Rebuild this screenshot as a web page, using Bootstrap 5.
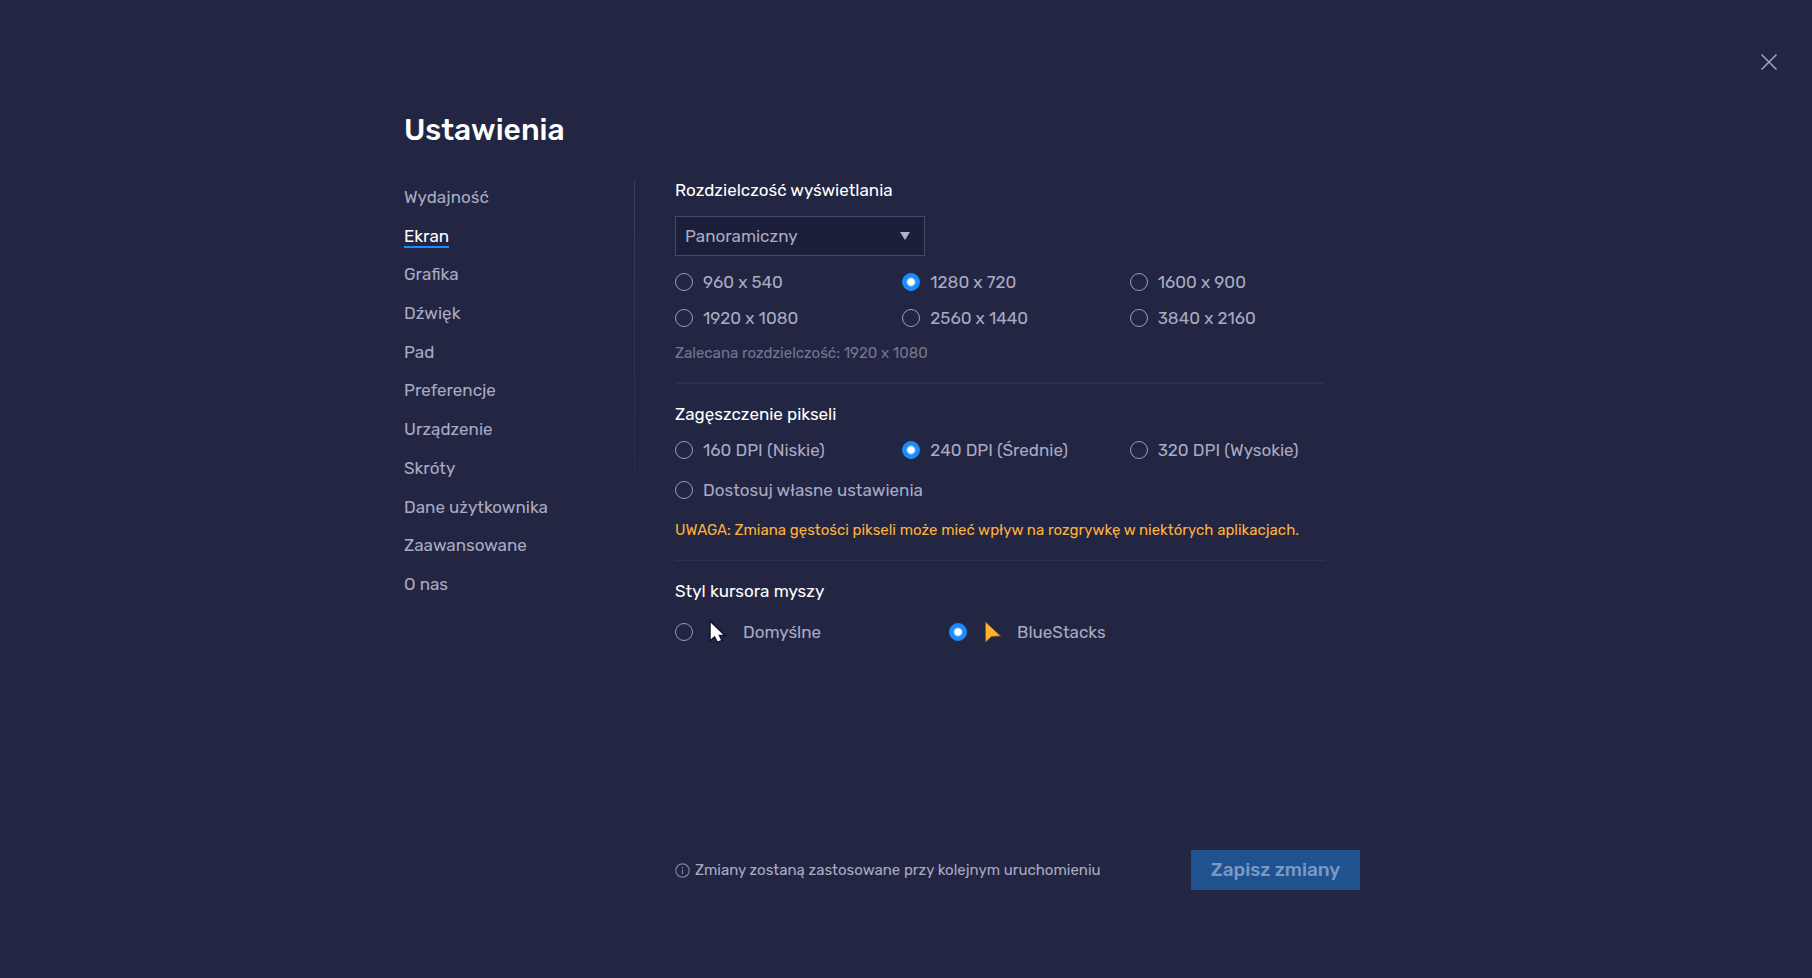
<!DOCTYPE html>
<html lang="pl">
<head>
<meta charset="utf-8">
<meta name="viewport" content="width=device-width, initial-scale=1">
<title>Ustawienia</title>
<link href="https://cdn.jsdelivr.net/npm/bootstrap@5.3.0/dist/css/bootstrap.min.css" rel="stylesheet">
<style>
  body {
    background: #232642;
    color: #a9abc3;
    font-family: Rubik, Roboto, sans-serif;
    font-size: 17px;
    line-height: 20px;
  }
  .settings-page { max-width: 1004px; }
  .settings-close { top: 48px; right: 29px; color: #a3a5bd; line-height: 0; }
  .settings-header { padding-top: 112px; }
  .settings-title { font-size: 30px; line-height: 36px; font-weight: 500; color: #fff; }
  .settings-body { margin-top: 32px; }

  .settings-nav { width: 230px; padding-top: 7px; }
  .settings-nav ul { min-height: 407px; }
  .settings-nav a { color: #a9abc3; text-decoration: none; display: inline-block; }
  .settings-nav a.current { color: #fff; box-shadow: 0 2px #1a8cff; }
  .settings-rule { width: 1px; height: 400px; margin-right: 40px; background: linear-gradient(#3a3d5c, #232642); }

  .settings-panel { max-width: 650px; }
  .section-title { font-size: 17px; line-height: 20px; font-weight: 400; color: #fff; margin: 0; padding: 0; float: none; }
  .view-select {
    width: 250px; height: 40px; padding: 0 32px 0 9px; margin: 16px 0;
    font-size: 17px; line-height: 20px; color: #a9abc3;
    border: 1px solid #464967; border-radius: 0;
    background: #1c1f3a url("data:image/svg+xml,%3Csvg xmlns='http://www.w3.org/2000/svg' viewBox='0 0 10 8'%3E%3Cpath fill='%23b1b3cc' d='M0 0h10L5 8z'/%3E%3C/svg%3E") no-repeat right 14px center / 10px 8px;
  }
  .option-grid { display: grid; grid-template-columns: repeat(3, 1fr); column-gap: 32px; row-gap: 16px; }
  .option { display: flex; align-items: center; gap: 10px; min-height: 20px; white-space: nowrap; }
  .option .form-check-input {
    width: 18px; height: 18px; margin: 0; flex: none;
    background-color: transparent; border: 1px solid #9c9eb8;
  }
  .option .form-check-input:checked {
    border-color: #1a8cff;
    background: radial-gradient(circle, #fff 0 3px, #1a8cff 5px);
  }
  .hint { font-size: 15px; color: #75778f; margin: 15px 0 19px; }
  .warning { font-size: 15px; color: #ffb13b; margin: 20px 0; }
  .divider { border: 0; border-top: 1px solid #2d3050; opacity: 1; margin: 0 0 20px; }
  .divider-strong { border-top-width: 2px; }
  .cursor-options { column-gap: 128px; margin-top: 18px; }
  .cursor-label { gap: 12px; }

  .settings-footer { padding: 0 48px 88px 271px; margin-top: 32px; }
  .footer-note { font-size: 15px; gap: 5px; }
  .save-btn {
    --bs-btn-disabled-bg: #20528f; --bs-btn-disabled-color: #7a9ac6; --bs-btn-disabled-opacity: 1;
    --bs-btn-disabled-border-color: #20528f;
    width: 169px; height: 40px; padding: 0; border-radius: 0;
    font-size: 19px; line-height: 22px; font-weight: 500;
  }
</style>
</head>
<body>
<button type="button" class="settings-close btn p-0 border-0 position-absolute" aria-label="Zamknij">
  <svg width="28" height="28" viewBox="0 0 28 28" fill="none" stroke="currentColor" stroke-width="1.5"><path d="M6.500 6.500l15 15M21.500 6.500l-15 15"/></svg>
</button>

<div class="settings-page container-fluid p-0 min-vh-100 d-flex flex-column">
  <header class="settings-header"><h1 class="settings-title m-0">Ustawienia</h1></header>

  <div class="settings-body d-flex flex-grow-1 align-items-start">
    <nav class="settings-nav flex-shrink-0" aria-label="Ustawienia">
      <ul class="list-unstyled m-0 d-flex flex-column justify-content-between">
        <li><a href="#">Wydajność</a></li>
        <li><a href="#" class="current" aria-current="page">Ekran</a></li>
        <li><a href="#">Grafika</a></li>
        <li><a href="#">Dźwięk</a></li>
        <li><a href="#">Pad</a></li>
        <li><a href="#">Preferencje</a></li>
        <li><a href="#">Urządzenie</a></li>
        <li><a href="#">Skróty</a></li>
        <li><a href="#">Dane użytkownika</a></li>
        <li><a href="#">Zaawansowane</a></li>
        <li><a href="#">O nas</a></li>
      </ul>
    </nav>
    <div class="settings-rule flex-shrink-0"></div>

    <main class="settings-panel flex-grow-1">
      <section>
        <h2 class="section-title"><label for="view">Rozdzielczość wyświetlania</label></h2>
        <select id="view" class="view-select form-select"><option>Panoramiczny</option></select>
        <div class="option-grid">
          <label class="option"><input class="form-check-input" type="radio" name="res">960 x 540</label>
          <label class="option"><input class="form-check-input" type="radio" name="res" checked>1280 x 720</label>
          <label class="option"><input class="form-check-input" type="radio" name="res">1600 x 900</label>
          <label class="option"><input class="form-check-input" type="radio" name="res">1920 x 1080</label>
          <label class="option"><input class="form-check-input" type="radio" name="res">2560 x 1440</label>
          <label class="option"><input class="form-check-input" type="radio" name="res">3840 x 2160</label>
        </div>
        <p class="hint">Zalecana rozdzielczość: 1920 x 1080</p>
      </section>
      <hr class="divider divider-strong">

      <section>
        <h2 class="section-title mb-3">Zagęszczenie pikseli</h2>
        <div class="option-grid">
          <label class="option"><input class="form-check-input" type="radio" name="dpi">160 DPI (Niskie)</label>
          <label class="option"><input class="form-check-input" type="radio" name="dpi" checked>240 DPI (Średnie)</label>
          <label class="option"><input class="form-check-input" type="radio" name="dpi">320 DPI (Wysokie)</label>
        </div>
        <label class="option mt-3 pt-1"><input class="form-check-input" type="radio" name="dpi">Dostosuj własne ustawienia</label>
        <p class="warning">UWAGA: Zmiana gęstości pikseli może mieć wpływ na rozgrywkę w niektórych aplikacjach.</p>
      </section>
      <hr class="divider">

      <section>
        <h2 class="section-title">Styl kursora myszy</h2>
        <div class="cursor-options d-flex">
          <label class="option cursor-label"><input class="form-check-input" type="radio" name="cursor">
            <svg width="26" height="26" viewBox="0 0 26 26"><path d="M5 2v20l4.500-4 3 5.500 4.500-2-2.500-5H20z" fill="#fff" stroke="#12142a" stroke-width="1.500"/></svg>
            Domyślne</label>
          <label class="option cursor-label"><input class="form-check-input" type="radio" name="cursor" checked>
            <svg width="26" height="26" viewBox="0 0 26 26"><path d="M6.500 3v20l6-5.500 9-.5z" fill="#ffb52b" stroke="#7a5a2c" stroke-width=".8"/></svg>
            BlueStacks</label>
        </div>
      </section>
    </main>
  </div>

  <footer class="settings-footer d-flex align-items-center justify-content-between">
    <div class="footer-note d-flex align-items-center">
      <svg width="15" height="15" viewBox="0 0 15 15" fill="none" stroke="#7d7f9b"><circle cx="7.500" cy="7.500" r="6.700" stroke-width="1.200"/><path d="M7.500 6.500v4.500M7.500 4v1.300" stroke-width="1.200"/></svg>
      Zmiany zostaną zastosowane przy kolejnym uruchomieniu
    </div>
    <button type="button" class="save-btn btn btn-primary" disabled>Zapisz zmiany</button>
  </footer>
</div>
<script src="https://cdn.jsdelivr.net/npm/bootstrap@5.3.0/dist/js/bootstrap.bundle.min.js"></script>
</body>
</html>
